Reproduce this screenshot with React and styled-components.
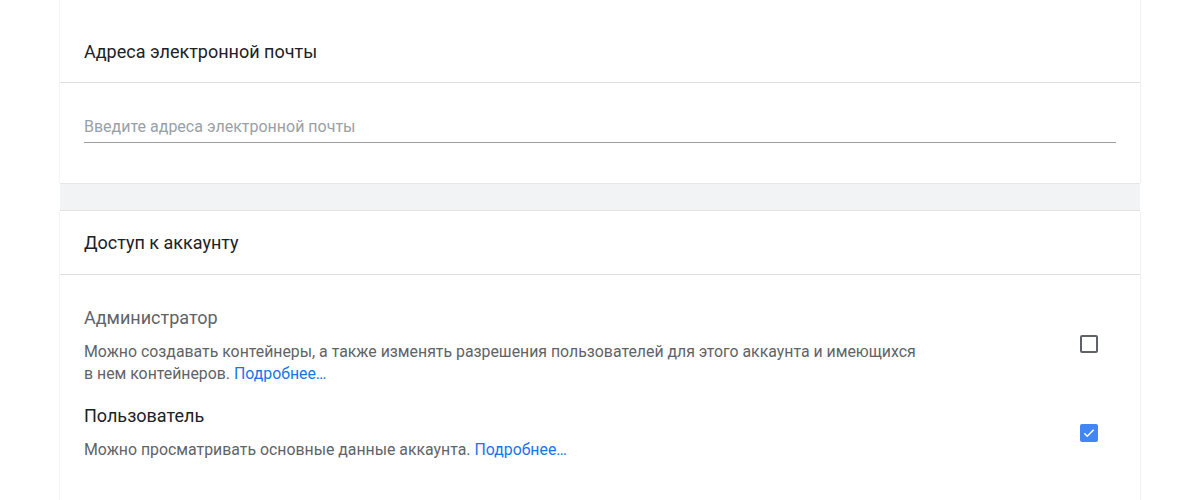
import React from "react";
import styled, { createGlobalStyle } from "styled-components";

const Global = createGlobalStyle`
  html, body { margin: 0; padding: 0; background: #fff; }
  body { font-family: Roboto, "Noto Sans", Arial, sans-serif; }
`;

const Page = styled.div`
  width: 1200px;
  height: 500px;
  overflow: hidden;
  padding: 0 60px;
  box-sizing: border-box;
  display: flex;
  flex-direction: column;
`;

const Card = styled.section`
  background: #fff;
  flex: ${p => p.$grow ? 1 : "none"};
  box-shadow: 1px 0 1px rgba(0,0,0,0.06), -1px 0 1px rgba(0,0,0,0.04);
`;

const CardHeader = styled.div`
  height: ${p => p.$h}px;
  display: flex;
  align-items: center;
  padding: ${p => p.$pt || 0}px 24px 0;
  box-sizing: border-box;
  border-bottom: 1px solid #e0e0e0;
  font-size: 18px;
  color: #202124;
`;

const CardBody = styled.div`
  padding: ${p => p.$pad};
`;

const Input = styled.input`
  display: block;
  width: 100%;
  height: 26px;
  box-sizing: border-box;
  border: none;
  border-bottom: 1px solid #9e9e9e;
  outline: none;
  font-family: inherit;
  font-size: 16px;
  padding: 0 0 6px;
  color: #202124;
  &::placeholder { color: #9aa0a6; }
`;

const Gap = styled.div`
  height: 26px;
  flex: none;
  background: #f1f3f4;
  border-top: 1px solid #e6e6e6;
  border-bottom: 1px solid #e6e6e6;
`;

const Role = styled.div`
  display: flex;
  align-items: center;
  justify-content: space-between;
  padding-right: 42px;
  margin-bottom: ${p => p.$mb}px;
`;

const RoleText = styled.div`
  max-width: 836px;
`;

const RoleName = styled.div`
  font-size: 18px;
  color: ${p => p.$muted ? "#5f6368" : "#202124"};
  line-height: 22px;
  margin-bottom: 12px;
`;

const RoleDesc = styled.div`
  font-size: 15.85px;
  line-height: 22px;
  color: #5f6368;
`;

const Link = styled.a`
  color: #1a73e8;
  text-decoration: none;
`;

const Box = styled.div`
  width: 18px;
  height: 18px;
  box-sizing: border-box;
  border-radius: 2px;
  border: 2px solid ${p => p.$checked ? "#4285f4" : "#5f6368"};
  background: ${p => p.$checked ? "#4285f4" : "#fff"};
  display: flex;
  align-items: center;
  justify-content: center;
  flex-shrink: 0;
  margin-bottom: ${p => p.$lift || 0}px;
`;

function Checkbox({ checked, lift }) {
  return (
    <Box $checked={checked} $lift={lift}>
      {checked && (
        <svg width="14" height="14" viewBox="0 0 24 24">
          <path d="M4 12.5l5 5L20 6.5" fill="none" stroke="#fff" strokeWidth="2.6" />
        </svg>
      )}
    </Box>
  );
}

export default function App() {
  return (
    <Page>
      <Global />
      <Card>
        <CardHeader $h={83} $pt={20}>Адреса электронной почты</CardHeader>
        <CardBody $pad="34px 24px 40px">
          <Input placeholder="Введите адреса электронной почты" />
        </CardBody>
      </Card>
      <Gap />
      <Card $grow>
        <CardHeader $h={64}>Доступ к аккаунту</CardHeader>
        <CardBody $pad="32px 0 0 24px">
          <Role $mb={20}>
            <RoleText>
              <RoleName $muted>Администратор</RoleName>
              <RoleDesc>
                Можно создавать контейнеры, а также изменять разрешения пользователей для этого аккаунта и имеющихся в нем контейнеров. <Link href="#">Подробнее…</Link>
              </RoleDesc>
            </RoleText>
            <Checkbox lift={4} />
          </Role>
          <Role $mb={0}>
            <RoleText>
              <RoleName>Пользователь</RoleName>
              <RoleDesc>
                Можно просматривать основные данные аккаунта. <Link href="#">Подробнее…</Link>
              </RoleDesc>
            </RoleText>
            <Checkbox checked />
          </Role>
        </CardBody>
      </Card>
    </Page>
  );
}
